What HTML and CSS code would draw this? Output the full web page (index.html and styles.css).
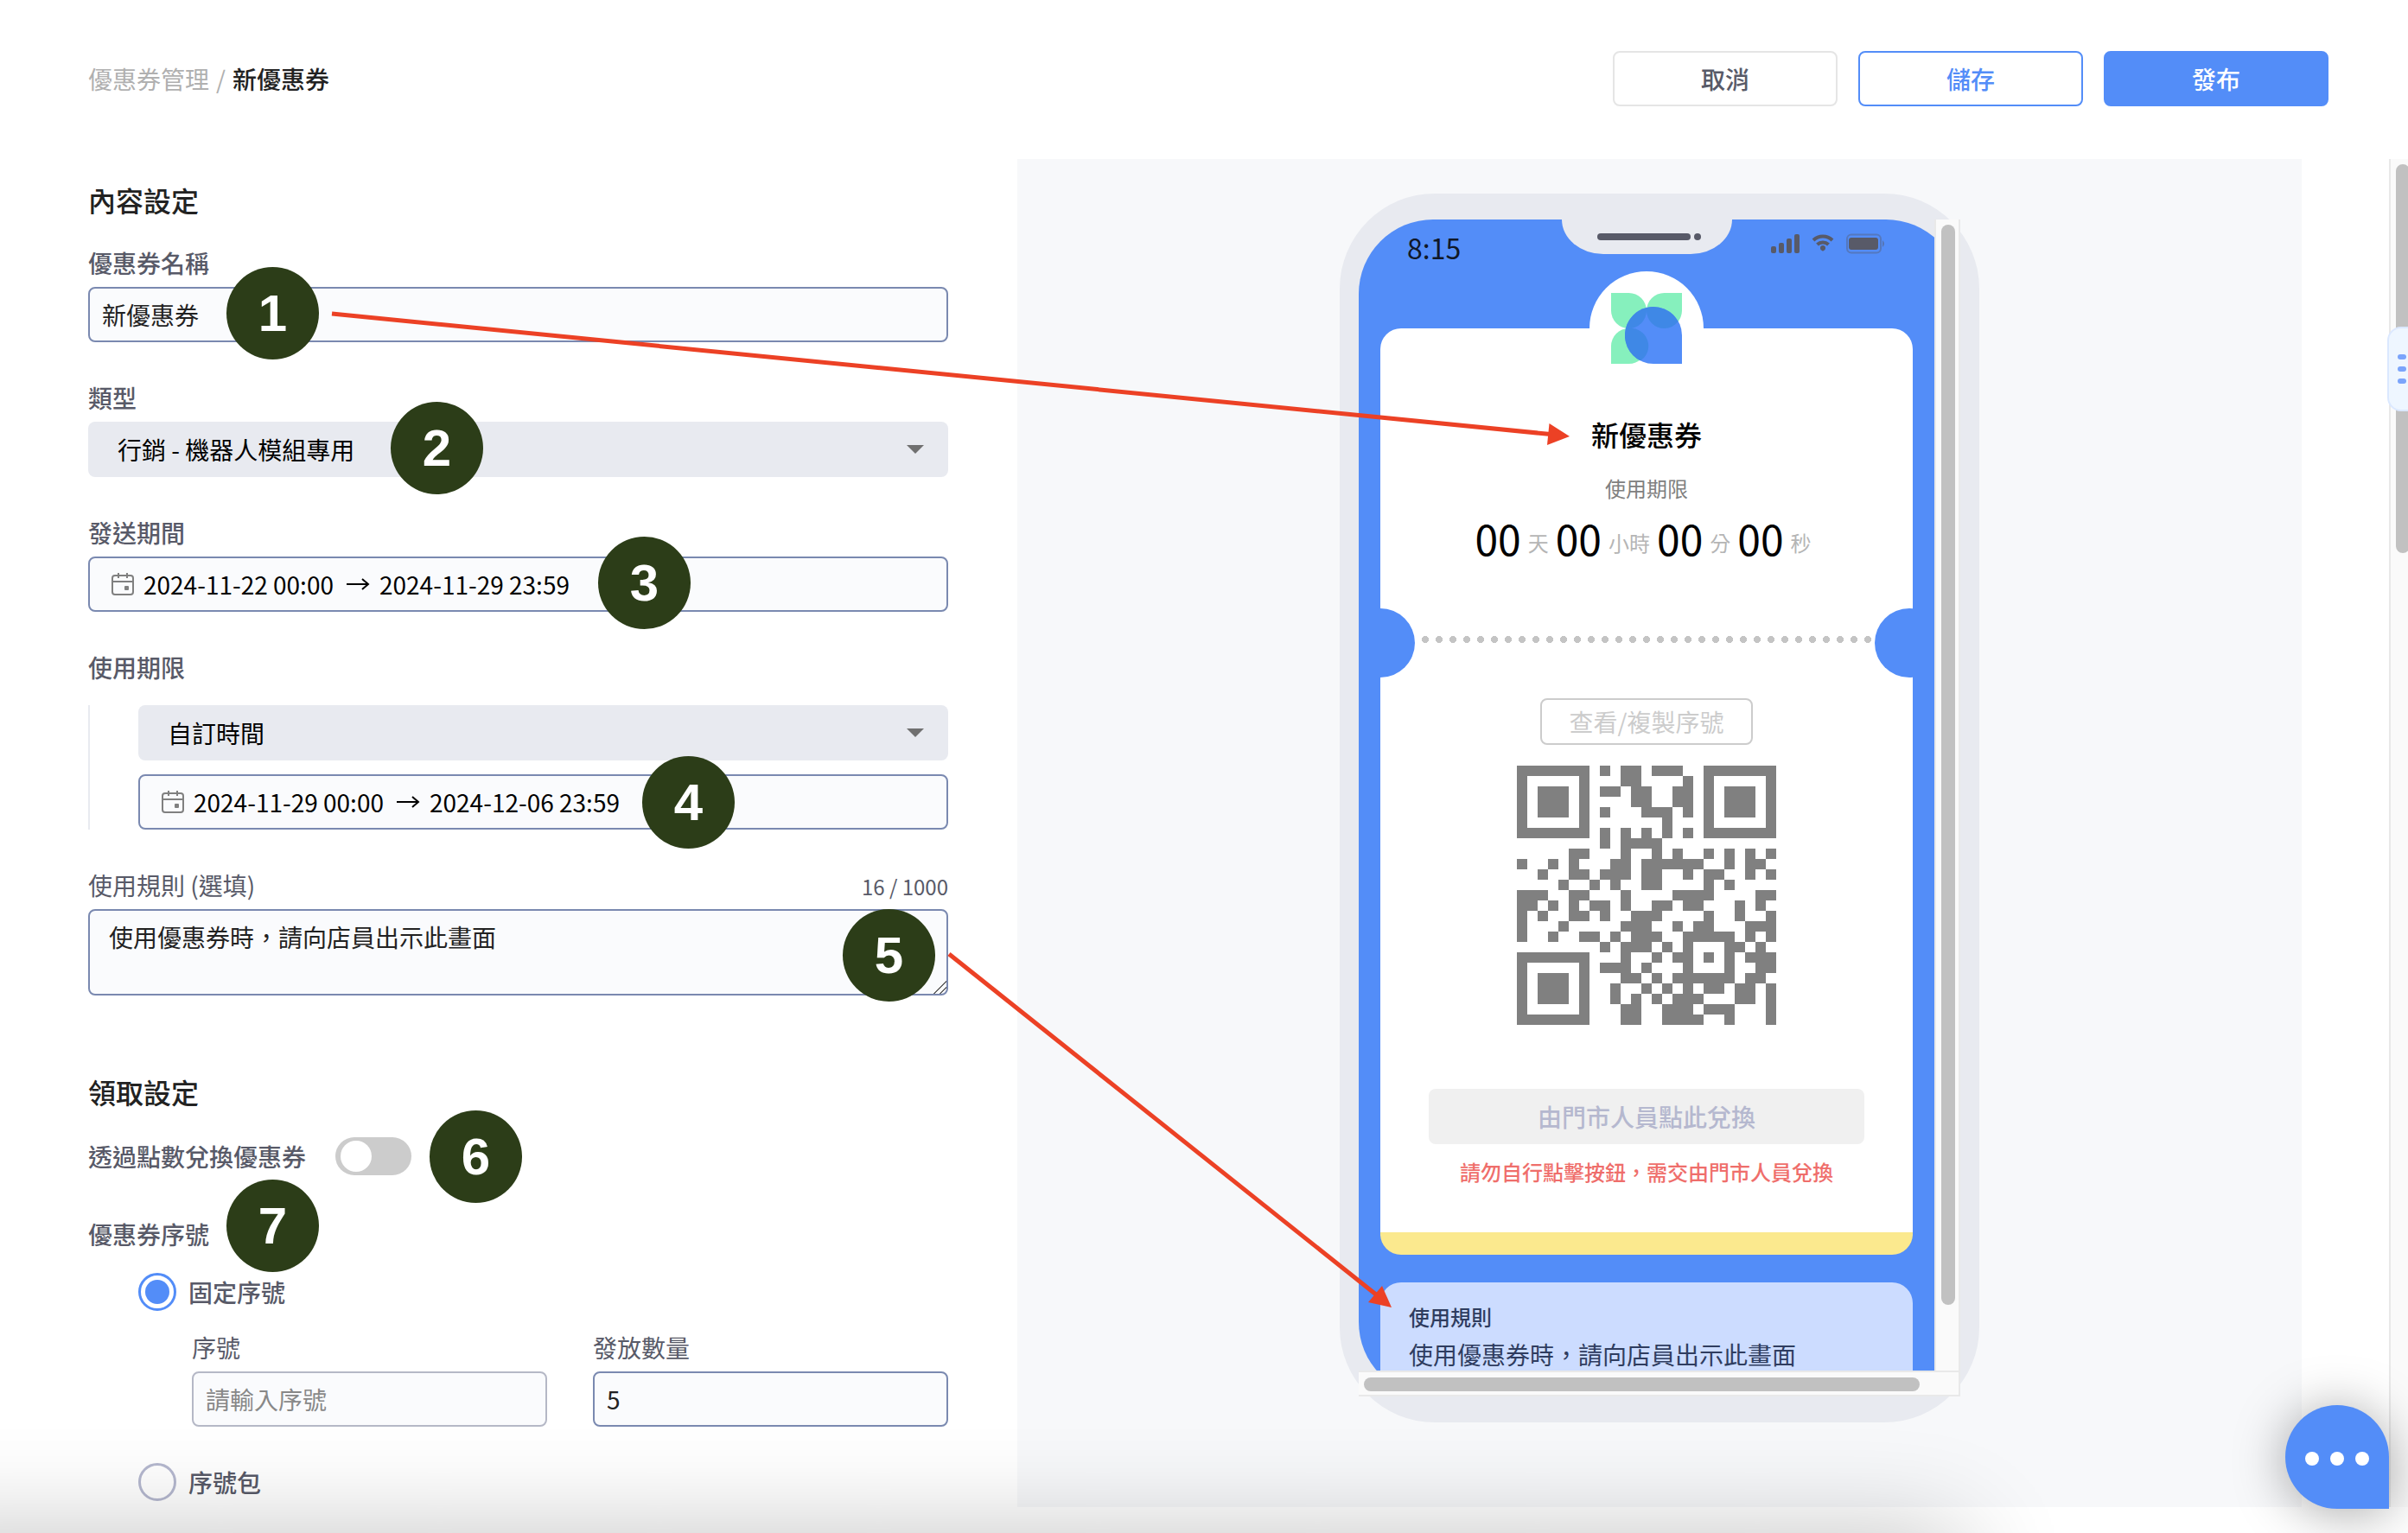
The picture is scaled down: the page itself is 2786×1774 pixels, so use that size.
FILE: index.html
```html
<!DOCTYPE html>
<html lang="zh-Hant">
<head>
<meta charset="utf-8">
<title>新優惠券</title>
<meta name="viewport" content="width=device-width, initial-scale=1">
<link rel="stylesheet" href="styles.css">
</head>
<body>
<header class="topbar">
  <nav class="crumbs"><a href="#">優惠券管理</a><span class="slash">/</span><span>新優惠券</span></nav>
  <div class="actions">
    <button class="btn" type="button">取消</button>
    <button class="btn outline" type="button">儲存</button>
    <button class="btn primary" type="button">發布</button>
  </div>
</header>

<main class="workspace">
  <form class="form">
    <section class="section">
      <h2>內容設定</h2>
      <div class="field">
        <label for="name">優惠券名稱</label>
        <input class="box" id="name" type="text" value="新優惠券">
      </div>
      <div class="field">
        <label for="type">類型</label>
        <div class="select"><select id="type"><option>行銷 - 機器人模組專用</option></select></div>
      </div>
      <div class="field">
        <label for="send-from">發送期間</label>
        <div class="box range">
          <svg class="cal" viewBox="0 0 28 28" aria-hidden="true"><rect x="2" y="4" width="24" height="22" rx="3"/><path d="M2 11h24M9 1v6M19 1v6"/><rect class="day" x="16" y="16" width="5" height="5" rx="1"/></svg>
          <input id="send-from" type="text" value="2024-11-22 00:00">
          <svg class="to" viewBox="0 0 30 20" aria-hidden="true"><path d="M2 10h25M20 4l7 6-7 6"/></svg>
          <input type="text" aria-label="發送結束" value="2024-11-29 23:59">
        </div>
      </div>
      <div class="field">
        <label for="valid">使用期限</label>
        <div class="nested">
          <div class="select"><select id="valid"><option>自訂時間</option></select></div>
          <div class="box range">
            <svg class="cal" viewBox="0 0 28 28" aria-hidden="true"><rect x="2" y="4" width="24" height="22" rx="3"/><path d="M2 11h24M9 1v6M19 1v6"/><rect class="day" x="16" y="16" width="5" height="5" rx="1"/></svg>
            <input type="text" aria-label="使用開始" value="2024-11-29 00:00">
            <svg class="to" viewBox="0 0 30 20" aria-hidden="true"><path d="M2 10h25M20 4l7 6-7 6"/></svg>
            <input type="text" aria-label="使用結束" value="2024-12-06 23:59">
          </div>
        </div>
      </div>
      <div class="field">
        <div class="label-row"><label class="light" for="rules">使用規則 (選填)</label><span class="count">16 / 1000</span></div>
        <textarea class="box" id="rules">使用優惠券時，請向店員出示此畫面</textarea>
      </div>
    </section>

    <section class="claim">
      <h2>領取設定</h2>
      <div class="toggle-row">
        <label for="points">透過點數兌換優惠券</label>
        <input class="toggle" id="points" type="checkbox" role="switch">
      </div>
      <fieldset class="serial">
        <legend>優惠券序號</legend>
        <label class="radio"><input type="radio" name="serial" checked>固定序號</label>
        <div class="pair">
          <div class="field">
            <label class="light" for="code">序號</label>
            <input class="box pale" id="code" type="text" placeholder="請輸入序號">
          </div>
          <div class="field">
            <label class="light" for="qty">發放數量</label>
            <input class="box" id="qty" type="text" value="5">
          </div>
        </div>
        <label class="radio"><input type="radio" name="serial">序號包</label>
      </fieldset>
    </section>
  </form>

  <section class="preview" aria-label="預覽">
    <div class="phone">
      <div class="screen">
        <div class="content">
          <div class="status">
            <span class="clock">8:15</span>
            <div class="notch"><i class="speaker"></i><i class="lens"></i></div>
            <svg class="signals" viewBox="0 0 136 24" aria-hidden="true">
              <g fill="#585a68"><rect x="1" y="15" width="6" height="8" rx="2"/><rect x="10" y="11" width="6" height="12" rx="2"/><rect x="19" y="6" width="6" height="17" rx="2"/><rect x="28" y="1" width="6" height="22" rx="2"/><circle cx="61" cy="17" r="3"/><path d="M59 18l2 3 2-3z"/></g>
              <g fill="none" stroke="#585a68" stroke-width="4"><path d="M50 8a16 16 0 0 1 22 0M54.500 13a9.500 9.500 0 0 1 13 0"/></g>
              <rect x="89" y="1.500" width="39" height="21" rx="5" fill="none" stroke="#585a68" stroke-opacity=".4" stroke-width="2"/>
              <rect x="91" y="5" width="34" height="14" rx="3" fill="#585a68"/>
              <path d="M130 8q4 4 0 8z" fill="#585a68" fill-opacity=".5"/>
            </svg>
          </div>
          <article class="coupon">
            <div class="logo">
              <svg viewBox="0 0 82 82" aria-hidden="true">
                <g fill="#86f0bd"><path d="M0 0H20.500A20.500 20.500 0 0 1 20.500 41A20.500 20.500 0 0 1 0 20.500z"/><path d="M82 0H61.500A20.500 20.500 0 0 0 61.500 41A20.500 20.500 0 0 0 82 20.500z"/><path d="M0 82H20.500A20.500 20.500 0 0 0 20.500 41A20.500 20.500 0 0 0 0 61.500z"/></g>
                <path d="M82 82H49A33 33 0 1 1 82 49z" fill="#538df8"/>
                <g fill="#3f88e6"><path d="M41 20.500A20.500 20.500 0 0 1 20.500 41H16.900A33 33 0 0 1 41 17z"/><path d="M41 20.500A20.500 20.500 0 0 0 61.500 41A20.500 20.500 0 0 0 77.500 33A33 33 0 0 0 41 17z"/><path d="M16.900 41H20.500A20.500 20.500 0 0 1 34 78.500A33 33 0 0 1 16.900 41z"/></g>
              </svg>
            </div>
            <h3>新優惠券</h3>
            <p class="until">使用期限</p>
            <div class="countdown"><b>00</b><span>天</span><b>00</b><span>小時</span><b>00</b><span>分</span><b>00</b><span>秒</span></div>
            <div class="tear"><i class="dots"></i></div>
            <button class="view" type="button">查看/複製序號</button>
            <svg class="qr" viewBox="0 -0.500 25 25" role="img" aria-label="QR code" shape-rendering="crispEdges">
              <path stroke="#808080" stroke-width="1" d="M0 0h7M8 0h1M10 0h2M13 0h3M18 0h7
              M0 1h1M6 1h1M10 1h2M16 1h1M18 1h1M24 1h1
              M0 2h1M2 2h3M6 2h1M8 2h2M11 2h2M15 2h2M18 2h1M20 2h3M24 2h1
              M0 3h1M2 3h3M6 3h1M11 3h2M15 3h2M18 3h1M20 3h3M24 3h1
              M0 4h1M2 4h3M6 4h1M8 4h1M12 4h3M16 4h1M18 4h1M20 4h3M24 4h1
              M0 5h1M6 5h1M14 5h1M18 5h1M24 5h1
              M0 6h7M8 6h1M10 6h1M12 6h1M14 6h1M16 6h1M18 6h7
              M8 7h1M10 7h4
              M5 8h2M10 8h1M13 8h1M15 8h1M18 8h1M20 8h1M22 8h1M24 8h1
              M0 9h1M3 9h1M5 9h1M9 9h2M12 9h6M20 9h1M22 9h2
              M2 10h1M5 10h2M8 10h3M12 10h2M16 10h1M18 10h2M22 10h1M24 10h1
              M4 11h1M7 11h1M9 11h1M12 11h2M18 11h1M20 11h1
              M0 12h3M5 12h2M10 12h1M15 12h4M23 12h2
              M0 13h2M3 13h1M5 13h1M7 13h2M10 13h1M13 13h2M16 13h2M21 13h1M23 13h1
              M0 14h1M2 14h1M5 14h2M8 14h1M11 14h3M18 14h1M21 14h1M24 14h1
              M0 15h1M4 15h1M10 15h3M15 15h1M17 15h2M22 15h3
              M0 16h1M3 16h1M6 16h2M9 16h1M11 16h3M16 16h5M22 16h1M24 16h1
              M8 17h1M10 17h3M14 17h1M16 17h1M20 17h2M23 17h1
              M0 18h7M10 18h1M13 18h1M15 18h2M18 18h1M20 18h1M22 18h3
              M0 19h1M6 19h1M8 19h3M12 19h1M16 19h1M20 19h1M23 19h2
              M0 20h1M2 20h3M6 20h1M10 20h2M13 20h1M15 20h6M22 20h2
              M0 21h1M2 21h3M6 21h1M9 21h1M12 21h1M14 21h1M16 21h1M18 21h2M21 21h2M24 21h1
              M0 22h1M2 22h3M6 22h1M9 22h1M11 22h1M13 22h1M15 22h3M21 22h2M24 22h1
              M0 23h1M6 23h1M10 23h2M14 23h3M18 23h3M24 23h1
              M0 24h7M10 24h2M14 24h4M20 24h1M24 24h1"/>
            </svg>
            <button class="redeem" type="button" disabled>由門市人員點此兌換</button>
            <p class="warn">請勿自行點擊按鈕，需交由門市人員兌換</p>
          </article>
          <section class="rules">
            <h4>使用規則</h4>
            <p>使用優惠券時，請向店員出示此畫面</p>
          </section>
        </div>
        <div class="vbar"></div>
        <div class="hbar"></div>
      </div>
    </div>
  </section>
  <div class="page-bar"></div>
</main>

<div class="notes" aria-hidden="true">
  <div class="dock-shadow"></div>
  <svg class="arrows" viewBox="0 0 2786 1774">
    <g stroke="#ec4125" stroke-width="5"><path d="M384 363L1794 502.500"/><path d="M1098 1104L1592 1498"/></g>
    <g fill="#ec4125"><path d="M1816 505l-23.500-15-2.500 25z"/><path d="M1610 1513l-11-25-16 19z"/></g>
  </svg>
  <span class="badge n1">1</span>
  <span class="badge n2">2</span>
  <span class="badge n3">3</span>
  <span class="badge n4">4</span>
  <span class="badge n5">5</span>
  <span class="badge n6">6</span>
  <span class="badge n7">7</span>
</div>
<div class="floating">
  <button class="side-tab" type="button" aria-label="開啟側欄"><i></i><i></i><i></i></button>
  <button class="chat" type="button" aria-label="聊天"><i></i><i></i><i></i></button>
</div>
</body>
</html>
```
FILE: styles.css
```css
:root {
  --blue: #538df8;
  --ink: #222;
  --label: #585a68;
  --line: #7a89b0;
  --fill: #e8eaf0;
}

* { box-sizing: border-box; }

body {
  margin: 0;
  min-height: 100vh;
  display: flex;
  flex-direction: column;
  position: relative;
  background: #fff;
  color: var(--ink);
  font: 400 28px/40px "Noto Sans CJK TC", sans-serif;
}

h2, h3, h4, p { margin: 0; }
button, input, select, textarea { font: inherit; color: inherit; margin: 0; }

/* top bar */
.topbar {
  height: 184px;
  padding: 59px 92px 0 102px;
  display: flex;
  justify-content: space-between;
  align-items: flex-start;
}
.crumbs { display: flex; gap: 8px; line-height: 64px; font-weight: 500; }
.crumbs a, .slash { color: #b0b0b0; text-decoration: none; font-weight: 400; }
.actions { display: flex; gap: 24px; }
.btn {
  width: 260px;
  height: 64px;
  padding: 0;
  border: 2px solid #e5e5e5;
  border-radius: 8px;
  background: #fff;
  color: var(--label);
  font-weight: 500;
}
.btn.outline { border-color: var(--blue); color: var(--blue); }
.btn.primary { border-color: var(--blue); background: var(--blue); color: #fff; }

/* workspace */
.workspace {
  flex: 1;
  margin-bottom: 30px;
  display: grid;
  grid-template-columns: minmax(0, 995fr) minmax(0, 1667fr) 22px;
  padding-left: 102px;
}

h2 { font-size: 32px; line-height: 48px; font-weight: 500; }
.form { padding-top: 23px; }
.section { display: flex; flex-direction: column; gap: 44px; }
.section h2 { margin-bottom: -15px; }
.field { display: flex; flex-direction: column; gap: 8px; }
label, legend { color: var(--label); font-weight: 500; }
label.light { font-weight: 400; }
.label-row { display: flex; justify-content: space-between; }
.count { font-size: 24px; color: var(--label); padding-top: 4px; line-height: 36px; }

.box {
  width: 100%;
  height: 64px;
  padding: 0 14px;
  border: 2px solid var(--line);
  border-radius: 8px;
  background: #fafbfd;
  outline: 0;
}
.box.pale { border-color: #b5b8c6; }
.box::placeholder { color: #888; opacity: 1; }
textarea.box { display: block; height: 100px; padding: 10px 22px; resize: vertical; }
textarea::-webkit-resizer {
  background: linear-gradient(135deg, transparent 48%, #666 48% 55%, transparent 55% 72%, #666 72% 79%, transparent 79%);
}

.select { display: grid; align-items: center; }
.select > select, .select::after { grid-area: 1 / 1; }
.select > select {
  appearance: none;
  height: 64px;
  padding: 0 34px;
  border: 0;
  border-radius: 8px;
  background: var(--fill);
  color: #000;
}
.select::after {
  content: "";
  justify-self: end;
  margin-right: 28px;
  width: 20px;
  height: 10px;
  background: #707070;
  clip-path: polygon(0 0, 100% 0, 50% 100%);
  pointer-events: none;
}

.range { display: flex; align-items: center; gap: 10px; padding: 0 24px; color: #000; }
.range input { width: 223px; height: 40px; padding: 0; border: 0; background: none; outline: 0; }
.cal { width: 28px; height: 28px; fill: none; stroke: #808080; stroke-width: 2; }
.cal .day { fill: #808080; stroke: none; }
.to { width: 30px; height: 20px; fill: none; stroke: #000; stroke-width: 2; }
.nested {
  display: grid;
  gap: 16px;
  margin-top: 16px;
  padding-left: 56px;
  border-left: 2px solid var(--fill);
}

.claim { margin-top: 87px; }
.toggle-row { display: flex; align-items: center; gap: 34px; margin-top: 29px; }
.toggle {
  appearance: none;
  width: 88px;
  height: 44px;
  padding: 4px 6px;
  border-radius: 22px;
  background: #ccc;
}
.toggle::before { content: ""; display: block; width: 36px; height: 36px; border-radius: 50%; background: #fff; }

.serial { margin: 48px 0 0; padding: 0; border: 0; }
.serial legend { padding: 0; margin-bottom: 25px; }
.radio { display: flex; align-items: center; gap: 14px; height: 44px; padding-left: 58px; }
.radio input {
  appearance: none;
  width: 44px;
  height: 44px;
  padding: 5px;
  border: 3px solid #b5b8cf;
  border-radius: 50%;
}
.radio input:checked { border-color: var(--blue); background: var(--blue) content-box; }
.pair { display: grid; grid-template-columns: 1fr 1fr; gap: 53px; padding: 22px 0 42px 120px; }

/* preview */
.preview { margin: 0 101px 0 80px; padding-top: 40px; background: #f7f8fa; }
.phone {
  width: 740px;
  margin: 0 auto;
  padding: 30px 22px;
  border-radius: 110px;
  background: var(--fill);
}
.screen { position: relative; }
.content {
  height: 1362px;
  padding-right: 30px;
  border-radius: 86px;
  background: var(--blue);
  overflow: hidden;
}
.status { position: relative; height: 126px; padding: 10px 0 0 56px; }
.clock { color: #101828; font-size: 32px; line-height: 44px; }
.notch {
  position: absolute;
  top: 0;
  left: 235px;
  width: 197px;
  height: 40px;
  padding: 16px 0 0 41px;
  display: flex;
  gap: 4px;
  border-radius: 0 0 48px 48px / 0 0 40px 40px;
  background: var(--fill);
}
.speaker, .lens { height: 8px; border-radius: 4px; background: var(--label); }
.speaker { width: 108px; }
.lens { width: 8px; }
.signals { position: absolute; left: 476px; top: 16px; width: 136px; height: 24px; }

.coupon {
  position: relative;
  margin: 0 25px;
  padding: 98px 0 52px;
  display: flex;
  flex-direction: column;
  align-items: center;
  border-bottom: 26px solid #fbe98e;
  border-radius: 24px;
  background: #fff;
}
.logo {
  position: absolute;
  top: -66px;
  left: 50%;
  width: 132px;
  height: 132px;
  margin-left: -66px;
  padding: 25px;
  border-radius: 50%;
  background: #fff;
}
.logo svg { display: block; width: 82px; height: 82px; }
h3 { font-size: 32px; line-height: 48px; font-weight: 500; color: #000; }
.until { margin-top: 21px; font-size: 24px; line-height: 36px; color: #808080; }
.countdown { display: flex; align-items: flex-end; margin-top: 7px; }
.countdown b { font-size: 48px; line-height: 64px; font-weight: 400; color: #000; }
.countdown span { margin: 0 8px; font-size: 24px; line-height: 52px; color: #b5b5b5; }
.tear { position: relative; align-self: stretch; height: 80px; margin-top: 50px; padding: 32px 48px; overflow: hidden; }
.tear::before, .tear::after {
  content: "";
  position: absolute;
  top: 0;
  width: 80px;
  height: 80px;
  border-radius: 50%;
  background: var(--blue);
}
.tear::before { left: -40px; }
.tear::after { right: -36px; }
.dots { display: block; height: 8px; background: radial-gradient(circle at 4px 4px, #c4c4c4 4px, transparent 4px) 0 0 / 16px 8px; }
.view {
  height: 54px;
  margin-top: 24px;
  padding: 0 32px;
  border: 2px solid #ccc;
  border-radius: 8px;
  background: #fff;
  color: #ccc;
}
.qr { width: 300px; height: 300px; margin-top: 24px; }
.redeem {
  width: 504px;
  height: 64px;
  margin-top: 74px;
  border: 0;
  border-radius: 8px;
  background: #f0f0f0;
  color: #b5b8cf;
  font-weight: 500;
}
.warn { margin-top: 14px; font-size: 24px; line-height: 36px; font-weight: 500; color: #ef6e6b; }
.rules {
  height: 240px;
  margin: 32px 25px 0;
  padding: 22px 33px;
  border-radius: 24px;
  background: #ccdcff;
  color: #2f3d5f;
}
.rules h4 { font-size: 24px; line-height: 36px; font-weight: 500; }
.rules p { margin-top: 5px; }

/* scrollbars */
.vbar, .hbar { position: absolute; background: #fafafa; }
.vbar { top: 0; right: 0; bottom: 0; width: 30px; padding: 6px 4px 106px 6px; border: solid #e9e9e9; border-width: 0 2px; }
.hbar { left: 0; right: 2px; bottom: 0; height: 30px; padding: 6px 45px 4px 6px; border: solid #e9e9e9; border-width: 2px 0; }
.vbar::before, .hbar::before { content: ""; display: block; height: 100%; border-radius: 8px; background: #c1c1c1; }
.page-bar { background: #fafafa; border-left: 2px solid #e8e8e8; padding: 6px 0 0 6px; overflow: hidden; }
.page-bar::before { content: ""; display: block; width: 16px; height: 450px; border-radius: 8px; background: #c1c1c1; }

/* numbered notes over the form */
.notes, .floating { position: absolute; inset: 0; overflow: hidden; pointer-events: none; }
.floating button { pointer-events: auto; }
.arrows { position: relative; display: block; width: 100%; }
.badge {
  position: absolute;
  width: 107px;
  height: 107px;
  border-radius: 50%;
  background: #2c3d18;
  color: #fff;
  font: 700 60px/107px "Liberation Sans", Arial, sans-serif;
  text-align: center;
}
.n1 { left: 262px; top: 309px; }
.n2 { left: 452px; top: 465px; }
.n3 { left: 692px; top: 621px; }
.n4 { left: 743px; top: 875px; }
.n5 { left: 975px; top: 1052px; }
.n6 { left: 497px; top: 1285px; }
.n7 { left: 262px; top: 1365px; }

/* floating controls */
.dock-shadow {
  position: absolute;
  left: -200px;
  right: 516px;
  top: 100%;
  height: 200px;
  box-shadow: 0 0 120px rgba(0, 0, 0, .24);
}
.side-tab {
  position: absolute;
  top: 378px;
  right: -20px;
  width: 44px;
  height: 98px;
  padding: 0 0 0 10px;
  display: flex;
  flex-direction: column;
  justify-content: center;
  gap: 8px;
  border: 2px solid #dbe8ff;
  border-radius: 16px;
  background: #eef6ff;
}
.side-tab i { width: 10px; height: 6px; border-radius: 3px; background: #7ba4fb; }
.chat {
  position: absolute;
  right: 22px;
  bottom: 28px;
  width: 120px;
  height: 120px;
  padding: 4px 0 0;
  display: flex;
  align-items: center;
  justify-content: center;
  gap: 13px;
  border: 0;
  border-radius: 50% 50% 0 50%;
  background: var(--blue);
  box-shadow: 0 4px 60px rgba(0, 0, 0, .35);
}
.chat i { width: 16px; height: 16px; border-radius: 50%; background: #fff; }
```
